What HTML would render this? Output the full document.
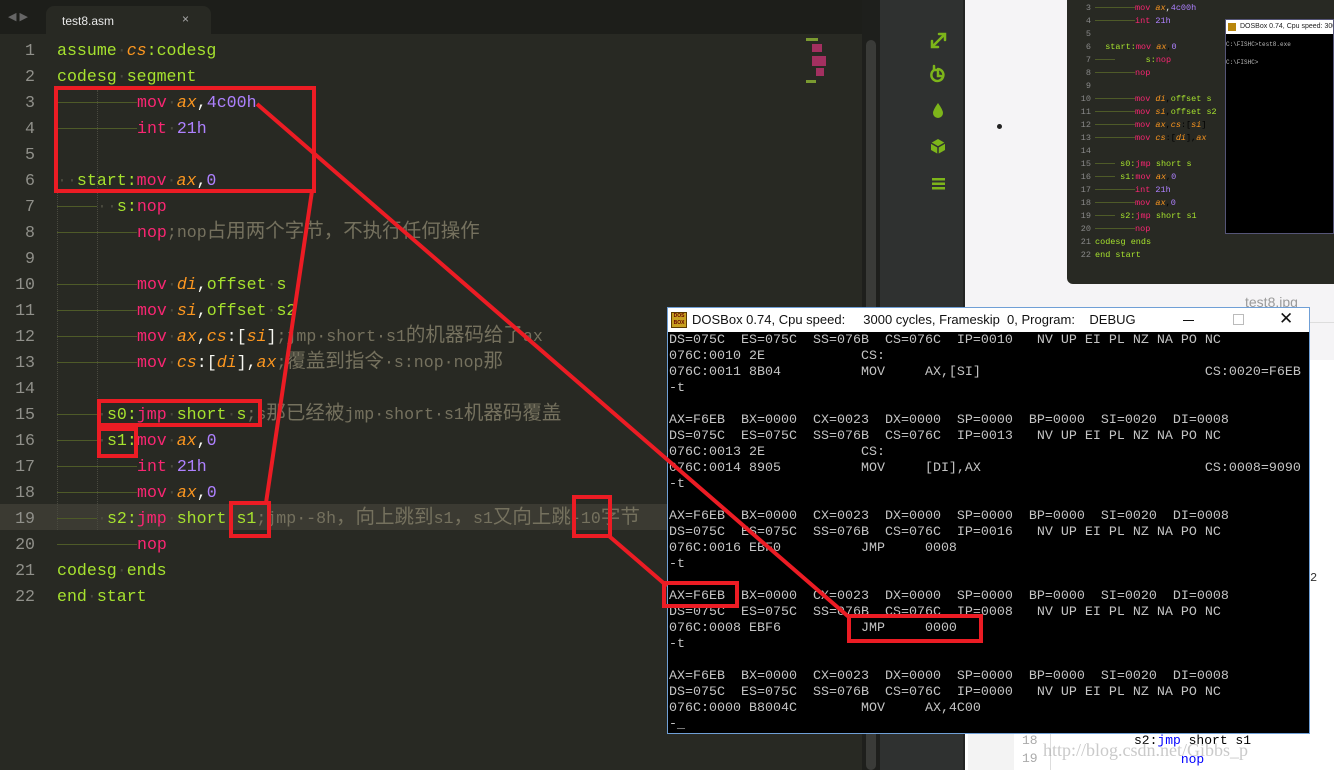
<!DOCTYPE html>
<html><head><meta charset="utf-8"><style>
*{margin:0;padding:0;box-sizing:border-box}
body{width:1334px;height:770px;overflow:hidden;position:relative;background:#fff;font-family:"Liberation Sans",sans-serif}
.abs{position:absolute}
#ed{left:0;top:0;width:880px;height:770px;background:#282923}
#tabbar{left:0;top:0;width:880px;height:34px;background:#1d1e1a}
#tab{left:46px;top:6px;width:165px;height:28px;background:#282923;border-radius:8px 8px 0 0;color:#e8e8e8;font-size:12px;padding:8px 0 0 16px}
.code{font-family:"Liberation Mono","Noto Sans CJK SC",monospace;font-size:16.6px;white-space:pre;line-height:26px}
.ln{position:absolute;left:0;width:35px;text-align:right;color:#90908a}
.cl{position:absolute;left:57px}
.g{color:#a6e22e}.p{color:#f92672}.o{color:#fd971f;font-style:italic}.v{color:#ae81ff}.w{color:#f8f8f2}.c{color:#75715e}.d{color:#4a4a3e}
.c .k{font-size:19.5px;line-height:20px}
.t{display:inline-block;width:40px;height:1px;background:#4e5a28;vertical-align:middle}
#side{left:880px;top:0;width:85px;height:770px;background:#2f3130}
#dos{left:667px;top:307px;width:643px;height:427px;border:1px solid #6f9fd6;background:#000}
#dtitle{left:0;top:0;width:641px;height:24px;background:#fff;font-size:13px;color:#111}
#dtxt{left:1px;top:25px;font-family:"Liberation Mono",monospace;font-size:13.33px;line-height:16px;color:#c4c4c4;white-space:pre}
#thumb{left:1067px;top:0;width:267px;height:284px;background:#282923;border-radius:0 0 0 6px}
.tc{font-family:"Liberation Mono",monospace;font-size:8.5px;white-space:pre;line-height:13px}
</style></head><body>
<div class="abs" style="left:965px;top:0;width:369px;height:360px;background:#f5f4f6"></div>
<div id="ed" class="abs"></div>
<div id="tabbar" class="abs"><div class="abs" style="left:8px;top:10px;color:#666;font-size:11px">◀ ▶</div></div>
<div id="tab" class="abs">test8.asm<span style="position:absolute;left:136px;top:6px;color:#aaa">×</span></div>
<div class="abs" style="left:862px;top:0;width:18px;height:770px;background:#1e1f1c"></div>
<div class="abs" style="left:866px;top:40px;width:10px;height:730px;background:#3a3b38;border-radius:5px"></div>
<div class="abs" style="left:806px;top:36px;width:40px;height:50px">
<div class="abs" style="left:0;top:2px;width:12px;height:3px;background:#7a9a30"></div>
<div class="abs" style="left:6px;top:8px;width:10px;height:8px;background:#a33060"></div>
<div class="abs" style="left:6px;top:20px;width:14px;height:10px;background:#a33060"></div>
<div class="abs" style="left:10px;top:32px;width:8px;height:8px;background:#a33060"></div>
<div class="abs" style="left:0;top:44px;width:10px;height:3px;background:#7a9a30"></div>
</div>
<div class="abs" style="left:0;top:504px;width:862px;height:26px;background:#3b3a32"></div>
<div class="abs" style="left:57px;top:90px;width:0;height:440px;border-left:1px dotted #4a4a40"></div>
<div class="abs" style="left:97px;top:90px;width:0;height:440px;border-left:1px dotted #4a4a40"></div>
<div class="abs code" style="left:0;top:38px;width:862px;height:600px">
<div class="ln" style="top:0">1</div><div class="cl" style="top:0"><span class="g">assume</span><span class="d">·</span><span class="o">cs</span><span class="g">:codesg</span></div>
<div class="ln" style="top:26px">2</div><div class="cl" style="top:26px"><span class="g">codesg</span><span class="d">·</span><span class="g">segment</span></div>
<div class="ln" style="top:52px">3</div><div class="cl" style="top:52px"><span class="t"></span><span class="t"></span><span class="p">mov</span><span class="d">·</span><span class="o">ax</span><span class="w">,</span><span class="v">4c00h</span></div>
<div class="ln" style="top:78px">4</div><div class="cl" style="top:78px"><span class="t"></span><span class="t"></span><span class="p">int</span><span class="d">·</span><span class="v">21h</span></div>
<div class="ln" style="top:104px">5</div>
<div class="ln" style="top:130px">6</div><div class="cl" style="top:130px"><span class="d">··</span><span class="g">start:</span><span class="p">mov</span><span class="d">·</span><span class="o">ax</span><span class="w">,</span><span class="v">0</span></div>
<div class="ln" style="top:156px">7</div><div class="cl" style="top:156px"><span class="t"></span><span class="d">··</span><span class="g">s:</span><span class="p">nop</span></div>
<div class="ln" style="top:182px">8</div><div class="cl" style="top:182px"><span class="t"></span><span class="t"></span><span class="p">nop</span><span class="c">;nop<span class="k">占用两个字节，不执行任何操作</span></span></div>
<div class="ln" style="top:208px">9</div>
<div class="ln" style="top:234px">10</div><div class="cl" style="top:234px"><span class="t"></span><span class="t"></span><span class="p">mov</span><span class="d">·</span><span class="o">di</span><span class="w">,</span><span class="g">offset</span><span class="d">·</span><span class="g">s</span></div>
<div class="ln" style="top:260px">11</div><div class="cl" style="top:260px"><span class="t"></span><span class="t"></span><span class="p">mov</span><span class="d">·</span><span class="o">si</span><span class="w">,</span><span class="g">offset</span><span class="d">·</span><span class="g">s2</span></div>
<div class="ln" style="top:286px">12</div><div class="cl" style="top:286px"><span class="t"></span><span class="t"></span><span class="p">mov</span><span class="d">·</span><span class="o">ax</span><span class="w">,</span><span class="o">cs</span><span class="w">:[</span><span class="o">si</span><span class="w">]</span><span class="c">;jmp·short·s1<span class="k">的机器码给了</span>ax</span></div>
<div class="ln" style="top:312px">13</div><div class="cl" style="top:312px"><span class="t"></span><span class="t"></span><span class="p">mov</span><span class="d">·</span><span class="o">cs</span><span class="w">:[</span><span class="o">di</span><span class="w">],</span><span class="o">ax</span><span class="c">;<span class="k">覆盖到指令</span>·s:nop·nop<span class="k">那</span></span></div>
<div class="ln" style="top:338px">14</div>
<div class="ln" style="top:364px">15</div><div class="cl" style="top:364px"><span class="t"></span><span class="d">·</span><span class="g">s0:</span><span class="p">jmp</span><span class="d">·</span><span class="g">short</span><span class="d">·</span><span class="g">s</span><span class="c">;s<span class="k">那已经被</span>jmp·short·s1<span class="k">机器码覆盖</span></span></div>
<div class="ln" style="top:390px">16</div><div class="cl" style="top:390px"><span class="t"></span><span class="d">·</span><span class="g">s1:</span><span class="p">mov</span><span class="d">·</span><span class="o">ax</span><span class="w">,</span><span class="v">0</span></div>
<div class="ln" style="top:416px">17</div><div class="cl" style="top:416px"><span class="t"></span><span class="t"></span><span class="p">int</span><span class="d">·</span><span class="v">21h</span></div>
<div class="ln" style="top:442px">18</div><div class="cl" style="top:442px"><span class="t"></span><span class="t"></span><span class="p">mov</span><span class="d">·</span><span class="o">ax</span><span class="w">,</span><span class="v">0</span></div>
<div class="ln" style="top:468px">19</div><div class="cl" style="top:468px"><span class="t"></span><span class="d">·</span><span class="g">s2:</span><span class="p">jmp</span><span class="d">·</span><span class="g">short</span><span class="d">·</span><span class="g">s1</span><span class="c">;jmp·-8h<span class="k">，向上跳到</span>s1<span class="k">，</span>s1<span class="k">又向上跳</span>-10<span class="k">字节</span></span></div>
<div class="ln" style="top:494px">20</div><div class="cl" style="top:494px"><span class="t"></span><span class="t"></span><span class="p">nop</span></div>
<div class="ln" style="top:520px">21</div><div class="cl" style="top:520px"><span class="g">codesg</span><span class="d">·</span><span class="g">ends</span></div>
<div class="ln" style="top:546px">22</div><div class="cl" style="top:546px"><span class="g">end</span><span class="d">·</span><span class="g">start</span></div>
</div>

<div id="side" class="abs"></div>
<div class="abs" style="left:963px;top:0;width:2px;height:770px;background:#232423"></div>
<svg class="abs" style="left:925px;top:28px" width="28" height="170" viewBox="0 0 28 170">
<g stroke="#7db51a" stroke-width="2.5" fill="none" stroke-linecap="round">
<path d="M8 18 L19 7 M14 6 H20 V12 M7 13 V19 H13"/>
<path d="M9 42 A6 6 0 1 0 13 41 M9 42 V38 M9 42 H13 M13 44 V48 H16"/>
</g>
<path d="M13 75 Q8 82 8 85 A5 5 0 0 0 18 85 Q18 82 13 75Z" fill="#7db51a"/>
<path d="M13 111 L20 115 V122 L13 126 L6 122 V115Z" fill="#7db51a"/><path d="M6 115 L13 119 L20 115 M13 119 V126" stroke="#2f3130" stroke-width="1.5" fill="none"/>
<g fill="#7db51a"><rect x="7" y="150" width="13" height="2.5"/><rect x="7" y="154.5" width="13" height="2.5"/><rect x="7" y="159" width="13" height="2.5"/></g>
</svg>
<div class="abs" style="left:997px;top:124px;width:5px;height:5px;border-radius:50%;background:#222"></div>

<div id="thumb" class="abs">
<div class="abs tc" style="left:0;top:2px;width:267px"><div style="position:absolute;left:0;top:0;width:24px;text-align:right;color:#888">3<br>4<br>5<br>6<br>7<br>8<br>9<br>10<br>11<br>12<br>13<br>14<br>15<br>16<br>17<br>18<br>19<br>20<br>21<br>22</div><div style="position:absolute;left:28px;top:0"><span class="t" style="width:40px"></span><span class="p">mov</span> <span class="o">ax</span><span class="w">,</span><span class="v">4c00h</span>
<span class="t" style="width:40px"></span><span class="p">int</span> <span class="v">21h</span>

  <span class="g">start:</span><span class="p">mov</span> <span class="o">ax</span>,<span class="v">0</span>
<span class="t" style="width:20px"></span>      <span class="g">s:</span><span class="p">nop</span>
<span class="t" style="width:40px"></span><span class="p">nop</span>

<span class="t" style="width:40px"></span><span class="p">mov</span> <span class="o">di</span>,<span class="g">offset s</span>
<span class="t" style="width:40px"></span><span class="p">mov</span> <span class="o">si</span>,<span class="g">offset s2</span>
<span class="t" style="width:40px"></span><span class="p">mov</span> <span class="o">ax</span>,<span class="o">cs</span>:[<span class="o">si</span>]
<span class="t" style="width:40px"></span><span class="p">mov</span> <span class="o">cs</span>:[<span class="o">di</span>],<span class="o">ax</span>

<span class="t" style="width:20px"></span> <span class="g">s0:</span><span class="p">jmp</span> <span class="g">short s</span>
<span class="t" style="width:20px"></span> <span class="g">s1:</span><span class="p">mov</span> <span class="o">ax</span>,<span class="v">0</span>
<span class="t" style="width:40px"></span><span class="p">int</span> <span class="v">21h</span>
<span class="t" style="width:40px"></span><span class="p">mov</span> <span class="o">ax</span>,<span class="v">0</span>
<span class="t" style="width:20px"></span> <span class="g">s2:</span><span class="p">jmp</span> <span class="g">short s1</span>
<span class="t" style="width:40px"></span><span class="p">nop</span>
<span class="g">codesg ends</span>
<span class="g">end start</span></div></div>
<div class="abs" style="left:158px;top:19px;width:109px;height:215px;background:#000;border:1px solid #557">
<div style="height:14px;background:#fff;font-size:7px;padding:3px 0 0 14px;color:#222;white-space:nowrap;overflow:hidden;position:relative"><span style="position:absolute;left:2px;top:3px;width:8px;height:8px;background:#b8860b"></span>DOSBox 0.74, Cpu speed: 3000</div>
<div class="tc" style="color:#bbb;font-size:6px;line-height:9px;padding-top:6px">C:\FISHC&gt;test8.exe

C:\FISHC&gt;</div>
</div>
</div>
<div class="abs" style="left:1245px;top:294px;color:#9a9a9a;font-size:14px">test8.jpg</div>
<div class="abs" style="left:1240px;top:322px;width:94px;height:1px;background:#ddd"></div>
<div class="abs" style="left:1310px;top:571px;color:#333;font-size:12px;font-family:'Liberation Mono',monospace">2</div>

<div class="abs" style="left:968px;top:733px;width:46px;height:37px;background:#f3f3f3"></div>
<div class="abs" style="left:1014px;top:733px;width:320px;height:37px;background:#fff"></div>
<div class="abs" style="left:1050px;top:733px;width:1px;height:37px;background:#ddd"></div>
<div class="abs" style="left:1022px;top:732px;font-family:'Liberation Mono',monospace;font-size:13px;line-height:18px;color:#aaa;white-space:pre">18
19</div>
<div class="abs" style="left:1134px;top:731px;font-family:'Liberation Mono',monospace;font-size:13px;line-height:19px;color:#000;white-space:pre">s2:<span style="color:#00f">jmp</span> short s1
      <span style="color:#00f">nop</span></div>
<div class="abs" style="left:1043px;top:740px;font-family:'Liberation Serif',serif;font-size:18px;color:rgba(150,150,150,.5)">http://blog.csdn.net/Gibbs_p</div>

<div id="dos" class="abs">
<div id="dtitle" class="abs"><div class="abs" style="left:3px;top:4px;width:16px;height:16px;background:#c8a020;border:1px solid #5a3a00;font-size:5px;color:#600;line-height:7px;text-align:center;font-weight:bold">DOS<br>BOX</div>
<div class="abs" style="left:24px;top:4px;white-space:pre">DOSBox 0.74, Cpu speed:     3000 cycles, Frameskip  0, Program:    DEBUG</div>
<div class="abs" style="left:515px;top:12px;width:11px;height:1px;background:#111"></div>
<div class="abs" style="left:565px;top:6px;width:11px;height:11px;border:1px solid #bbb"></div>
<div class="abs" style="left:611px;top:1px;font-size:17px">✕</div></div>
<div id="dtxt" class="abs">DS=075C  ES=075C  SS=076B  CS=076C  IP=0010   NV UP EI PL NZ NA PO NC
076C:0010 2E            CS:
076C:0011 8B04          MOV     AX,[SI]                            CS:0020=F6EB
-t

AX=F6EB  BX=0000  CX=0023  DX=0000  SP=0000  BP=0000  SI=0020  DI=0008
DS=075C  ES=075C  SS=076B  CS=076C  IP=0013   NV UP EI PL NZ NA PO NC
076C:0013 2E            CS:
076C:0014 8905          MOV     [DI],AX                            CS:0008=9090
-t

AX=F6EB  BX=0000  CX=0023  DX=0000  SP=0000  BP=0000  SI=0020  DI=0008
DS=075C  ES=075C  SS=076B  CS=076C  IP=0016   NV UP EI PL NZ NA PO NC
076C:0016 EBF0          JMP     0008
-t

AX=F6EB  BX=0000  CX=0023  DX=0000  SP=0000  BP=0000  SI=0020  DI=0008
DS=075C  ES=075C  SS=076B  CS=076C  IP=0008   NV UP EI PL NZ NA PO NC
076C:0008 EBF6          JMP     0000
-t

AX=F6EB  BX=0000  CX=0023  DX=0000  SP=0000  BP=0000  SI=0020  DI=0008
DS=075C  ES=075C  SS=076B  CS=076C  IP=0000   NV UP EI PL NZ NA PO NC
076C:0000 B8004C        MOV     AX,4C00
-_</div>
</div>

<svg class="abs" style="left:0;top:0" width="1334" height="770">
<g fill="none" stroke="#ec1c24" stroke-width="4">
<rect x="56" y="88" width="258" height="103"/>
<rect x="99" y="401" width="161" height="24"/>
<rect x="99" y="429" width="37" height="27"/>
<rect x="231" y="503" width="38" height="33"/>
<rect x="574" y="497" width="36" height="39"/>
<rect x="664" y="583" width="73" height="23"/>
<rect x="849" y="616" width="132" height="25"/>
<path d="M257 104 L850 618"/>
<path d="M312 191 L266 503"/>
<path d="M609 536 L667 586"/>
</g>
</svg>
</body></html>
